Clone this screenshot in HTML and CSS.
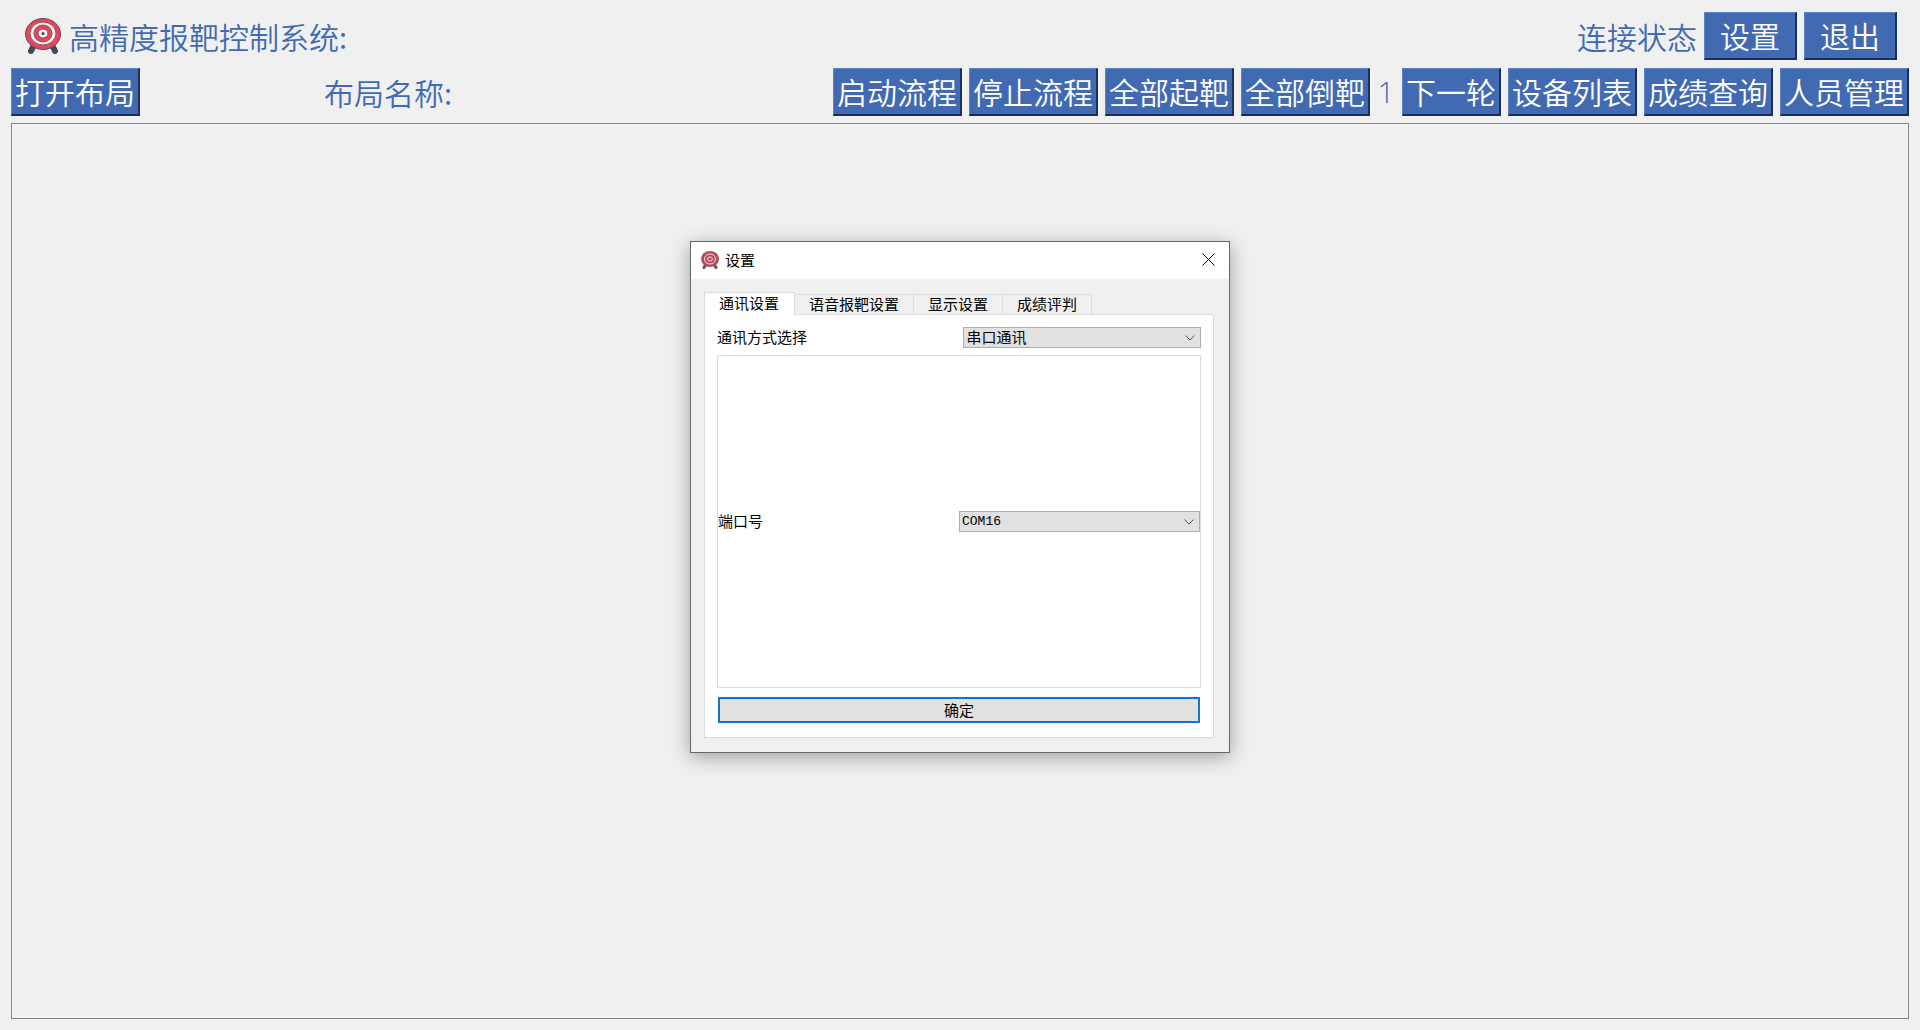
FILE: index.html
```html
<!DOCTYPE html>
<html lang="zh-CN">
<head>
<meta charset="UTF-8">
<meta name="viewport" content="width=device-width, initial-scale=1.0">
<title>高精度报靶控制系统</title>
<link rel="stylesheet" href="styles.css">
</head>
<body>

<svg width="0" height="0" class="defs">
  <symbol id="target" viewBox="0 0 36 36">
    <path d="M9 27 6 33M27 27 30 33" stroke="#45465a" stroke-width="6" stroke-linecap="round"/>
    <ellipse cx="18" cy="16" rx="17.5" ry="15.5" fill="#e5475a" stroke="#6b4650"/>
    <ellipse cx="18" cy="15.5" rx="13" ry="11.5" fill="#f3f1f2" stroke="#8d4b57"/>
    <ellipse cx="18" cy="15.5" rx="9" ry="8.5" fill="#e5475a" stroke="#8d4b57"/>
    <ellipse cx="18" cy="15.5" rx="5" ry="4.5" fill="#f3f1f2" stroke="#8d4b57"/>
    <circle cx="18" cy="15.5" r="1.5" fill="#45465a"/>
  </symbol>
  <symbol id="target-small" viewBox="0 0 18 18">
    <path d="M4.5 14 3 16.500M13.500 14 15 16.500" stroke="#55505f" stroke-width="3" stroke-linecap="round"/>
    <ellipse cx="9" cy="8" rx="9" ry="8" fill="#b84a5c"/>
    <ellipse cx="9" cy="8" rx="5.5" ry="5" fill="none" stroke="#f0dfe2"/>
    <ellipse cx="9" cy="8" rx="2.5" ry="2" fill="none" stroke="#f0dfe2"/>
  </symbol>
</svg>

<header class="topbar">
  <svg class="logo"><use href="#target"/></svg>
  <h1 class="title">高精度报靶控制系统:</h1>
  <div class="actions">
    <span>连接状态</span>
    <button class="btn wide">设置</button>
    <button class="btn wide">退出</button>
  </div>
</header>

<nav class="toolbar">
  <button class="btn">打开布局</button>
  <span class="layout-name">布局名称:</span>
  <div class="actions">
    <button class="btn">启动流程</button>
    <button class="btn">停止流程</button>
    <button class="btn">全部起靶</button>
    <button class="btn">全部倒靶</button>
    <span class="round">1</span>
    <button class="btn">下一轮</button>
    <button class="btn">设备列表</button>
    <button class="btn">成绩查询</button>
    <button class="btn">人员管理</button>
  </div>
</nav>

<main class="canvas"></main>

<div class="dialog" role="dialog" aria-labelledby="dialog-title">
  <div class="dialog-head">
    <svg class="dialog-icon"><use href="#target-small"/></svg>
    <h2 class="dialog-title" id="dialog-title">设置</h2>
    <button class="close" aria-label="关闭">
      <svg width="13" height="13" viewBox="0 0 13 13"><path d="M.5.5l12 12M12.5.5l-12 12" stroke="#000" fill="none"/></svg>
    </button>
  </div>
  <div class="dialog-body">
    <div class="tabs" role="tablist">
      <button class="tab active" role="tab" aria-selected="true">通讯设置</button>
      <button class="tab" role="tab">语音报靶设置</button>
      <button class="tab" role="tab">显示设置</button>
      <button class="tab" role="tab">成绩评判</button>
    </div>
    <form class="pane">
      <div class="row">
        <label for="mode">通讯方式选择</label>
        <div class="combo">
          <select id="mode"><option>串口通讯</option></select>
          <svg class="arrow" viewBox="0 0 10 6"><path d="M.5.5 5 5 9.5.5" stroke="#555" fill="none"/></svg>
        </div>
      </div>
      <div class="group">
        <div class="group-row">
          <label for="port">端口号</label>
          <div class="combo">
            <select id="port" class="mono"><option>COM16</option></select>
            <svg class="arrow" viewBox="0 0 10 6"><path d="M.5.5 5 5 9.5.5" stroke="#555" fill="none"/></svg>
          </div>
        </div>
      </div>
      <div class="pane-foot">
        <button class="ok" type="button">确定</button>
      </div>
    </form>
  </div>
</div>

</body>
</html>
```
FILE: styles.css
```css
* {
  box-sizing: border-box;
}

body {
  margin: 0;
  min-height: 100vh;
  padding: 12px 11px 11px;
  display: flex;
  flex-direction: column;
  background: #f0f0f0;
  color: #426ab3;
  font-family: "Noto Sans CJK SC", sans-serif;
  font-size: 30px;
  font-weight: 350;
  line-height: 44px;
}

button, select {
  font: inherit;
  color: inherit;
}

h1, h2 {
  margin: 0;
  font: inherit;
}

.defs {
  position: absolute;
}

.topbar, .toolbar, .actions {
  display: flex;
  align-items: center;
}

.topbar {
  padding: 0 12px 0 14px;
}

.logo {
  width: 36px;
  height: 36px;
  margin-right: 8px;
}

.toolbar {
  margin-top: 8px;
}

.layout-name {
  margin-left: 184px;
}

.actions {
  margin-left: auto;
  gap: 7px;
}

.round {
  width: 18px;
  font-family: "Open Sans", sans-serif;
  text-align: center;
}

.btn {
  height: 48px;
  padding: 0 3px 1px;
  border: 1px solid #5b84c8;
  border-right: 2px solid #1c2f55;
  border-bottom: 2px solid #1c2f55;
  background: #426ab3;
  color: #fff;
}

.btn.wide {
  padding: 0 15px 1px;
}

.canvas {
  flex: 1;
  margin-top: 7px;
  border: 1px solid #828790;
}

.dialog {
  position: absolute;
  top: 241px;
  left: 50%;
  width: 540px;
  transform: translateX(-50%);
  border: 1px solid #666;
  background: #f0f0f0;
  box-shadow: 0 4px 18px rgba(0, 0, 0, 0.35);
  color: #000;
  font-size: 15px;
  font-weight: 400;
  line-height: 20px;
}

.dialog-head {
  display: flex;
  align-items: center;
  height: 37px;
  padding: 0 14px 2px 10px;
  background: #fff;
}

.dialog-icon {
  width: 18px;
  height: 18px;
  margin-right: 6px;
}

.close {
  display: flex;
  margin-left: auto;
  padding: 0;
  border: 0;
  background: none;
}

.dialog-body {
  padding: 13px 15px 14px 13px;
}

.tabs {
  display: flex;
  align-items: flex-end;
}

.tab {
  height: 20px;
  padding: 0 14px 2px;
  border: 1px solid #dcdcdc;
  border-width: 1px 1px 0 0;
  background: #f0f0f0;
  line-height: 17px;
}

.tab.active {
  height: 23px;
  margin-bottom: -1px;
  padding: 0 15px 3px 14px;
  border-left-width: 1px;
  background: #fff;
  z-index: 1;
}

.pane {
  padding: 12px 12px 14px;
  border: 1px solid #dcdcdc;
  background: #fff;
}

.row {
  display: grid;
  grid-template-columns: 1fr 1fr;
  gap: 7px;
}

.combo {
  position: relative;
}

.combo select {
  display: block;
  width: 100%;
  height: 21px;
  padding: 0 3px 2px;
  appearance: none;
  border: 1px solid #adadad;
  border-radius: 0;
  background: #e1e1e1;
  line-height: 17px;
}

.combo .mono {
  padding: 0 2px;
  font-family: "Liberation Mono", monospace;
  font-size: 13px;
  line-height: 19px;
}

.arrow {
  position: absolute;
  top: 8px;
  right: 6px;
  width: 10px;
  height: 6px;
  pointer-events: none;
}

.group {
  display: flex;
  align-items: center;
  min-height: 333px;
  margin-top: 7px;
  border: 1px solid #dcdcdc;
}

.group-row {
  flex: 1;
  display: grid;
  grid-template-columns: 1fr 1fr;
}

.pane-foot {
  padding: 9px 1px 0;
}

.ok {
  display: block;
  width: 100%;
  height: 26px;
  padding: 0;
  border: 2px solid #1177c4;
  background: #e1e1e1;
}
```
